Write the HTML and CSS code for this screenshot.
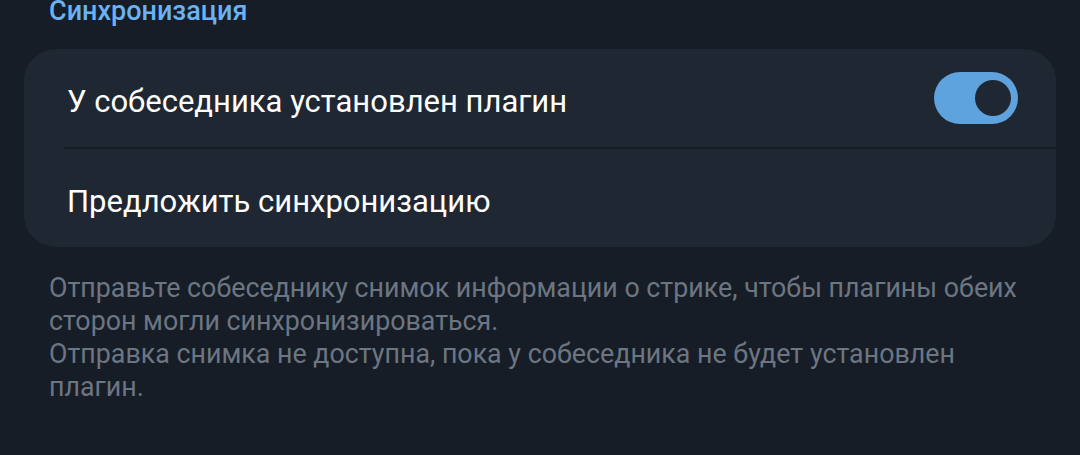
FILE: index.html
```html
<!DOCTYPE html>
<html lang="ru">
<head>
<meta charset="utf-8">
<link rel="stylesheet" href="styles.css">
</head>
<body>
<section class="section">
  <h2 class="section-title">Синхронизация</h2>
  <div class="card">
    <div class="row">
      <span class="row-label">У собеседника установлен плагин</span>
      <span class="toggle on"><span class="knob"></span></span>
    </div>
    <div class="divider"></div>
    <div class="row">
      <span class="row-label">Предложить синхронизацию</span>
    </div>
  </div>
  <p class="hint">Отправьте собеседнику снимок информации о стрике, чтобы плагины обеих сторон могли синхронизироваться.<br>Отправка снимка не доступна, пока у собеседника не будет установлен плагин.</p>
</section>
</body>
</html>
```

FILE: styles.css
```css
html, body {
  margin: 0;
  padding: 0;
  background: #171d26;
  width: 1080px;
  height: 455px;
  overflow: hidden;
  font-family: Roboto, "Noto Sans", sans-serif;
}
.section {
  padding: 0 24px;
}
.section-title {
  margin: -5px 0 0 25px;
  font-size: 27px;
  line-height: 32px;
  font-weight: 500;
  color: #6ab2f2;
}
.card {
  margin-top: 22px;
  background: #1f2733;
  border-radius: 32px;
  overflow: hidden;
}
.row {
  height: 98px;
  display: flex;
  align-items: center;
  justify-content: space-between;
  padding: 0 38px 0 43px;
}
.row-label {
  color: #ffffff;
  font-size: 31px;
  padding-top: 6px;
}
.divider {
  height: 2px;
  margin-left: 40px;
  background: #161c24;
}
.toggle {
  width: 84px;
  height: 52px;
  border-radius: 26px;
  background: #5fa3de;
  display: flex;
  align-items: center;
  justify-content: flex-end;
  padding-right: 7px;
  box-sizing: border-box;
}
.knob {
  width: 36px;
  height: 36px;
  border-radius: 50%;
  background: #1f2733;
}
.hint {
  margin: 25px 10px 0 25px;
  color: #6c7683;
  font-size: 26.8px;
  line-height: 33px;
}
```
